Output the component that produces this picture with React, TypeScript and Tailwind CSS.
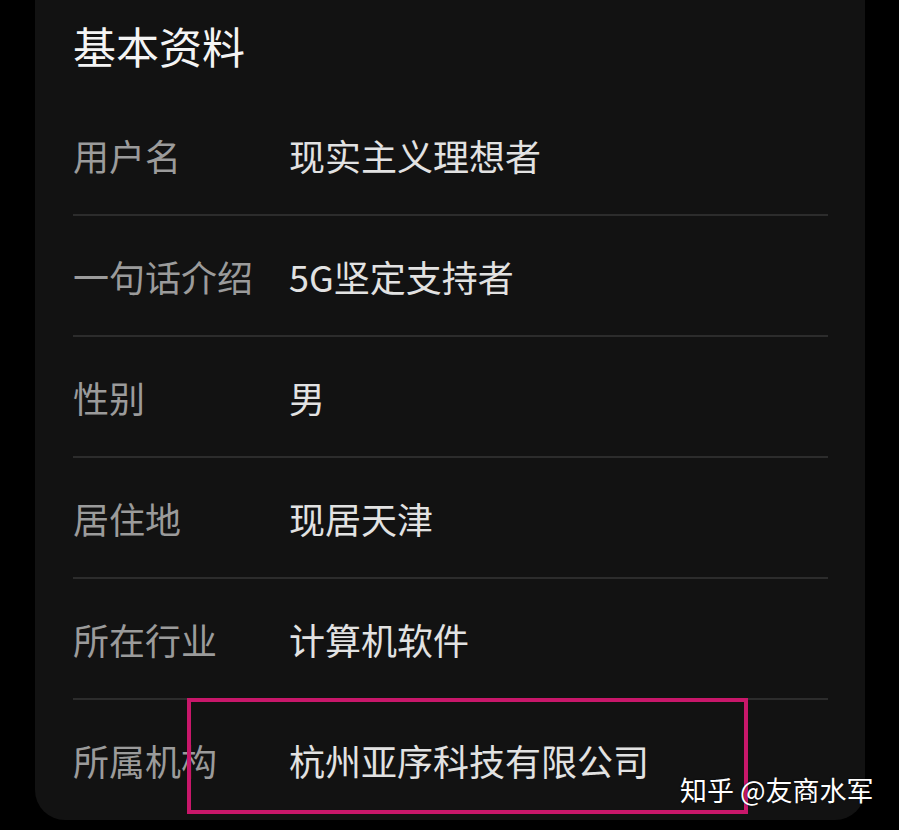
import React from 'react';

const ROWS: { label: string; value: string }[] = [
  { label: '用户名', value: '现实主义理想者' },
  { label: '一句话介绍', value: '5G坚定支持者' },
  { label: '性别', value: '男' },
  { label: '居住地', value: '现居天津' },
  { label: '所在行业', value: '计算机软件' },
  { label: '所属机构', value: '杭州亚序科技有限公司' },
];

const FONT = { fontFamily: '"Noto Sans CJK SC", "Noto Sans", sans-serif' };

export default function App() {
  return (
    <div className="relative w-[899px] h-[830px] overflow-hidden bg-black" style={FONT}>
      <div className="ml-[35px] mt-[-30px] w-[830px] rounded-[30px] bg-[#121212] pl-[38px] pr-[37px] pt-[30px] pb-[1px]">
        <div className="h-[95px] flex items-center text-[43px] text-[#f4f4f4] leading-none pb-[4px]">基本资料</div>
        {ROWS.map((row, i) => (
          <div key={row.label}>
            {i > 0 && <div className="h-[2px] bg-[#2c2c2c]" />}
            <div className="h-[119px] flex items-center text-[36px] leading-none">
              <span className="w-[216px] text-[#9b9b9b]">{row.label}</span>
              <span className="text-[#e2e2e2]">{row.value}</span>
            </div>
          </div>
        ))}
      </div>

      {/* highlight box */}
      <div className="absolute left-[187px] top-[698px] w-[561px] h-[116px] border-[4px] border-[#c8176a]" />

      {/* watermark */}
      <div
        className="absolute left-[680px] top-[776px] text-[27px] leading-none text-white whitespace-nowrap"
        style={{ textShadow: '0 0 2px rgba(0,0,0,0.8)' }}
      >
        知乎 @友商水军
      </div>
    </div>
  );
}
